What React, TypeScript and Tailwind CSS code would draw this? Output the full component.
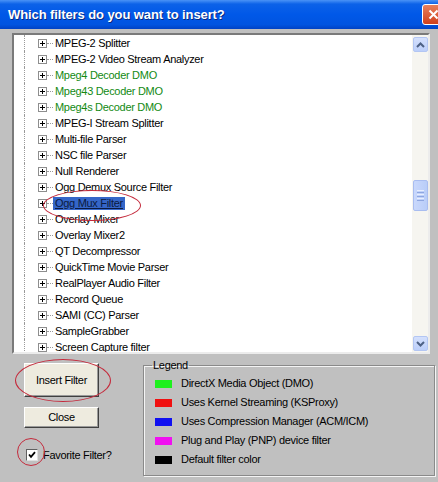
const items: { label: string; green?: boolean; selected?: boolean }[] = [
  { label: "MPEG-2 Splitter" },
  { label: "MPEG-2 Video Stream Analyzer" },
  { label: "Mpeg4 Decoder DMO", green: true },
  { label: "Mpeg43 Decoder DMO", green: true },
  { label: "Mpeg4s Decoder DMO", green: true },
  { label: "MPEG-I Stream Splitter" },
  { label: "Multi-file Parser" },
  { label: "NSC file Parser" },
  { label: "Null Renderer" },
  { label: "Ogg Demux Source Filter" },
  { label: "Ogg Mux Filter", selected: true },
  { label: "Overlay Mixer" },
  { label: "Overlay Mixer2" },
  { label: "QT Decompressor" },
  { label: "QuickTime Movie Parser" },
  { label: "RealPlayer Audio Filter" },
  { label: "Record Queue" },
  { label: "SAMI (CC) Parser" },
  { label: "SampleGrabber" },
  { label: "Screen Capture filter" },
];

const legend = [
  { color: "bg-[#1ef01e]", label: "DirectX Media Object (DMO)" },
  { color: "bg-[#f01010]", label: "Uses Kernel Streaming (KSProxy)" },
  { color: "bg-[#1010f0]", label: "Uses Compression Manager (ACM/ICM)" },
  { color: "bg-[#f010f0]", label: "Plug and Play (PNP) device filter" },
  { color: "bg-[#000000]", label: "Default filter color" },
];

function PlusBox() {
  return (
    <div className="flex h-[9px] w-[9px] items-center justify-center border border-[#8e8e8e] bg-white">
      <svg width="7" height="7" viewBox="0 0 7 7">
        <rect x="1" y="3" width="5" height="1" fill="#000" />
        <rect x="3" y="1" width="1" height="5" fill="#000" />
      </svg>
    </div>
  );
}

function ScrollButton({ up }: { up?: boolean }) {
  return (
    <div className="mx-auto flex h-[15px] w-[15px] items-center justify-center rounded-[2px] border border-[#b3c6f3] bg-[linear-gradient(to_bottom,#d4e0fd,#bccffa)]">
      <svg width="9" height="6" viewBox="0 0 9 6">
        <path
          d={up ? "M1 5 L4.5 1.5 L8 5" : "M1 1 L4.5 4.5 L8 1"}
          stroke="#4d6185"
          strokeWidth="2"
          fill="none"
        />
      </svg>
    </div>
  );
}

export default function App() {
  return (
    <div className="relative flex h-[482px] w-[438px] flex-col overflow-hidden bg-[#c0c0c0] font-['Liberation_Sans',Arial,sans-serif] text-[11px] tracking-[-0.3px] text-black">
      {/* title bar */}
      <div className="flex h-[29px] shrink-0 items-center bg-[linear-gradient(to_bottom,#4a93f6_0%,#0c62e8_14%,#0058e8_50%,#0054e0_85%,#0042c4_100%)]">
        <span className="pl-[8px] text-[13px] font-bold tracking-[-0.1px] text-white [text-shadow:1px_1px_0_#0a2a80]">
          Which filters do you want to insert?
        </span>
        <div className="ml-auto mr-[-6px] flex h-[21px] w-[22px] items-center justify-center rounded-[3px] border border-white bg-[linear-gradient(to_bottom,#e8805c,#d0401c)]">
          <svg width="11" height="11" viewBox="0 0 11 11">
            <path d="M1.5 1.5 L9.5 9.5 M9.5 1.5 L1.5 9.5" stroke="#fff" strokeWidth="2" />
          </svg>
        </div>
      </div>

      {/* list box */}
      <div className="ml-[12px] mt-[4px] flex h-[321px] w-[418px] border-2 border-b-[#ececec] border-l-[#7a7a7a] border-r-[#ececec] border-t-[#7a7a7a] bg-white">
        <div className="flex-1 overflow-hidden">
          {items.map((it) => (
            <div key={it.label} className="flex h-[16px] items-center whitespace-nowrap">
              <div className="w-[10px]" />
              <div className="h-full w-0 border-l border-dotted border-[#9a9a9a]" />
              <div className="w-[13px]" />
              <PlusBox />
              <div className="w-[6px] border-t border-dotted border-[#9a9a9a]" />
              <span
                className={
                  it.selected
                    ? "bg-[#3566c8] px-[2px] leading-[13px] text-[#0b1a40] underline"
                    : it.green
                      ? "px-[2px] text-[#138a13]"
                      : "px-[2px]"
                }
              >
                {it.label}
              </span>
            </div>
          ))}
        </div>
        {/* scrollbar */}
        <div className="flex w-[16px] flex-col bg-[#f6f5f0] pt-[2px]">
          <ScrollButton up />
          <div className="h-[128px]" />
          <div className="mx-auto flex h-[31px] w-[15px] flex-col items-center justify-center gap-[1px] rounded-[2px] border border-[#a9bdf0] bg-[linear-gradient(to_right,#c9d8fc,#b9cdf8)]">
            <div className="h-px w-[7px] bg-[#e8eefe]" />
            <div className="h-px w-[7px] bg-[#8ea6e0]" />
            <div className="h-px w-[7px] bg-[#e8eefe]" />
            <div className="h-px w-[7px] bg-[#8ea6e0]" />
            <div className="h-px w-[7px] bg-[#e8eefe]" />
            <div className="h-px w-[7px] bg-[#8ea6e0]" />
          </div>
          <div className="flex-1" />
          <ScrollButton />
          <div className="h-[1px]" />
        </div>
      </div>

      {/* bottom area */}
      <div className="flex">
        <div className="flex w-[143px] flex-col pl-[24px] pt-[9px]">
          <button className="flex h-[34px] w-[75px] items-center justify-center border border-b-[#404040] border-l-white border-r-[#404040] border-t-white bg-[#eeebdf] shadow-[inset_-1px_-1px_0_#9a9a9a]">
            Insert Filter
          </button>
          <button className="mt-[10px] flex h-[21px] w-[75px] items-center justify-center border border-b-[#404040] border-l-white border-r-[#404040] border-t-white bg-[#eeebdf] shadow-[inset_-1px_-1px_0_#9a9a9a]">
            Close
          </button>
          <div className="mt-[19px] flex items-center pl-[2px]">
            <div className="flex h-[12px] w-[12px] items-center justify-center border border-b-[#e0e0e0] border-l-[#606060] border-r-[#e0e0e0] border-t-[#606060] bg-white">
              <svg width="8" height="8" viewBox="0 0 8 8">
                <path d="M1 3.5 L3 5.8 L7 1.2" stroke="#000" strokeWidth="1.8" fill="none" />
              </svg>
            </div>
            <span className="pl-[5px]">Favorite Filter?</span>
          </div>
        </div>

        <fieldset className="mt-[5px] h-[117px] w-[292px] border border-[#8a8a8a] px-[11px] shadow-[inset_1px_1px_0_#f4f4f4,1px_1px_0_#f4f4f4]">
          <legend className="ml-[-3px] px-[1px] leading-[12px]">Legend</legend>
          <div className="flex flex-col pt-[3px]">
            {legend.map((l) => (
              <div key={l.label} className="flex h-[19px] items-center">
                <div className={`h-[8px] w-[17px] ${l.color}`} />
                <span className="pl-[9px]">{l.label}</span>
              </div>
            ))}
          </div>
        </fieldset>
      </div>

      {/* red annotation ellipses */}
      <div className="pointer-events-none absolute left-[43px] top-[190px] h-[31px] w-[98px] rounded-[50%] border border-[#c42a3c]" />
      <div className="pointer-events-none absolute left-[15px] top-[359px] h-[43px] w-[96px] rounded-[50%] border border-[#c42a3c]" />
      <div className="pointer-events-none absolute left-[17px] top-[438px] h-[28px] w-[28px] rounded-[50%] border border-[#c42a3c]" />
    </div>
  );
}
